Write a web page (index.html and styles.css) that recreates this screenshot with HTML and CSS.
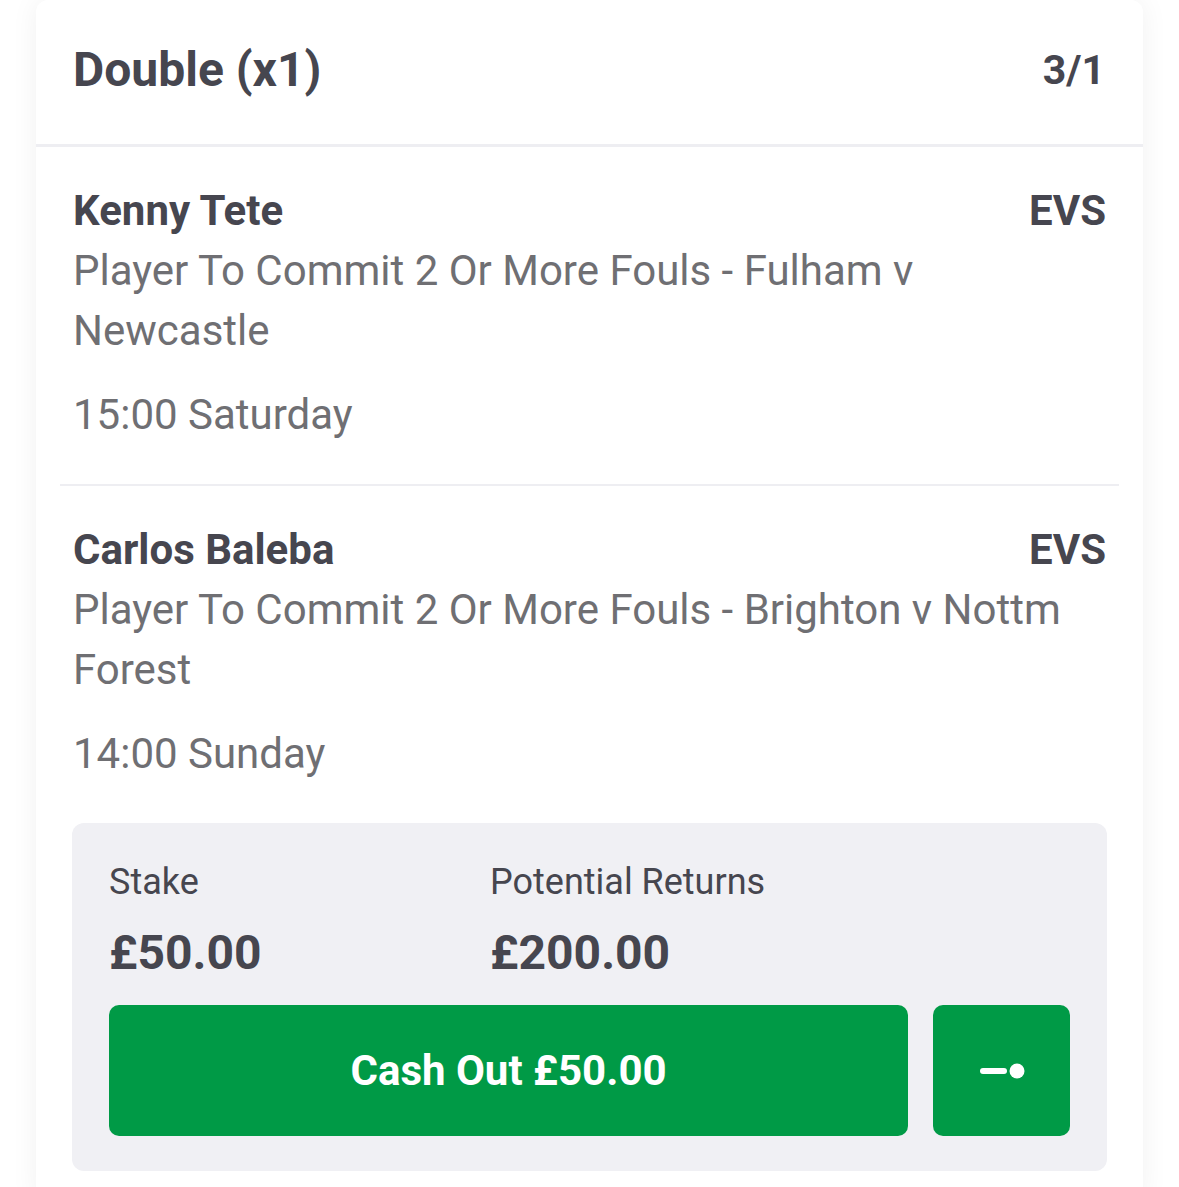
FILE: index.html
```html
<!DOCTYPE html>
<html lang="en">
<head>
<meta charset="utf-8">
<title>Double bet</title>
<link rel="stylesheet" href="styles.css">
</head>
<body>
<div class="page">
  <section class="card">
    <header class="card-head">
      <h1 class="title">Double (x1)</h1>
      <span class="odds">3/1</span>
    </header>
    <div class="leg">
      <div class="leg-top">
        <span class="player">Kenny Tete</span>
        <span class="price">EVS</span>
      </div>
      <p class="market">Player To Commit 2 Or More Fouls - Fulham v Newcastle</p>
      <p class="time">15:00 Saturday</p>
    </div>
    <div class="leg-divider"></div>
    <div class="leg">
      <div class="leg-top">
        <span class="player">Carlos Baleba</span>
        <span class="price">EVS</span>
      </div>
      <p class="market">Player To Commit 2 Or More Fouls - Brighton v Nottm Forest</p>
      <p class="time">14:00 Sunday</p>
    </div>
    <div class="summary">
      <div class="figures">
        <div class="figure figure-stake">
          <span class="label">Stake</span>
          <span class="amount">£50.00</span>
        </div>
        <div class="figure">
          <span class="label">Potential Returns</span>
          <span class="amount">£200.00</span>
        </div>
      </div>
      <div class="actions">
        <button class="btn-cashout">Cash Out £50.00</button>
        <button class="btn-slider" aria-label="Partial cash out">
          <svg width="50" height="20" viewBox="0 0 50 20">
            <rect x="3" y="7" width="27" height="6" rx="3" fill="#fff"/>
            <circle cx="40" cy="10" r="7.5" fill="#fff"/>
          </svg>
        </button>
      </div>
    </div>
  </section>
</div>
</body>
</html>
```

FILE: styles.css
```css
* { box-sizing: border-box; }

html, body {
  margin: 0;
  padding: 0;
  background: #ffffff;
}

body {
  font-family: Roboto, "Noto Sans", "Liberation Sans", sans-serif;
  color: #46464f;
}

.page {
  padding: 0 36px 0 36px;
}

.card {
  width: 1107px;
  min-height: 1200px;
  background: #ffffff;
  border-radius: 12px 12px 0 0;
  box-shadow: 0 0 28px rgba(0, 0, 0, 0.06);
}

.card-head {
  height: 147px;
  display: flex;
  align-items: center;
  justify-content: space-between;
  padding: 0 38px 4px 37px;
  border-bottom: 3px solid #eeeef2;
}

.title {
  margin: 0;
  font-size: 48px;
  font-weight: 700;
  line-height: 60px;
  color: #46464f;
}

.odds {
  font-size: 41px;
  font-weight: 700;
  color: #46464f;
}

.leg {
  padding: 34px 37px 39px 37px;
}

.leg-top {
  display: flex;
  justify-content: space-between;
  align-items: center;
  height: 60px;
}

.player, .price {
  font-size: 42px;
  font-weight: 700;
  line-height: 60px;
  color: #46464f;
}

.market {
  margin: 0;
  font-size: 42px;
  line-height: 60px;
  color: #6f6f73;
}

.time {
  margin: 24px 0 0 0;
  font-size: 42px;
  line-height: 60px;
  color: #6f6f73;
}

.leg-divider {
  height: 2px;
  margin: 0 24px;
  background: #eeeef2;
}

.summary {
  margin: 0 36px;
  background: #f0f0f4;
  border-radius: 12px;
  padding: 36px 37px 35px 37px;
}

.figures {
  display: flex;
}

.figure {
  display: flex;
  flex-direction: column;
}

.figure-stake {
  width: 381px;
}

.label {
  font-size: 36px;
  line-height: 46px;
  color: #46464f;
}

.amount {
  margin-top: 22px;
  font-size: 48px;
  font-weight: 700;
  line-height: 52px;
  color: #46464f;
}

.actions {
  display: flex;
  gap: 25px;
  margin-top: 26px;
}

.btn-cashout,
.btn-slider {
  height: 131px;
  border: 0;
  border-radius: 10px;
  background: #009a46;
  color: #ffffff;
  font-family: inherit;
  display: flex;
  align-items: center;
  justify-content: center;
}

.btn-cashout {
  flex: 1;
  font-size: 42px;
  font-weight: 700;
}

.btn-slider {
  width: 137px;
  flex: none;
  padding: 0;
}
```
